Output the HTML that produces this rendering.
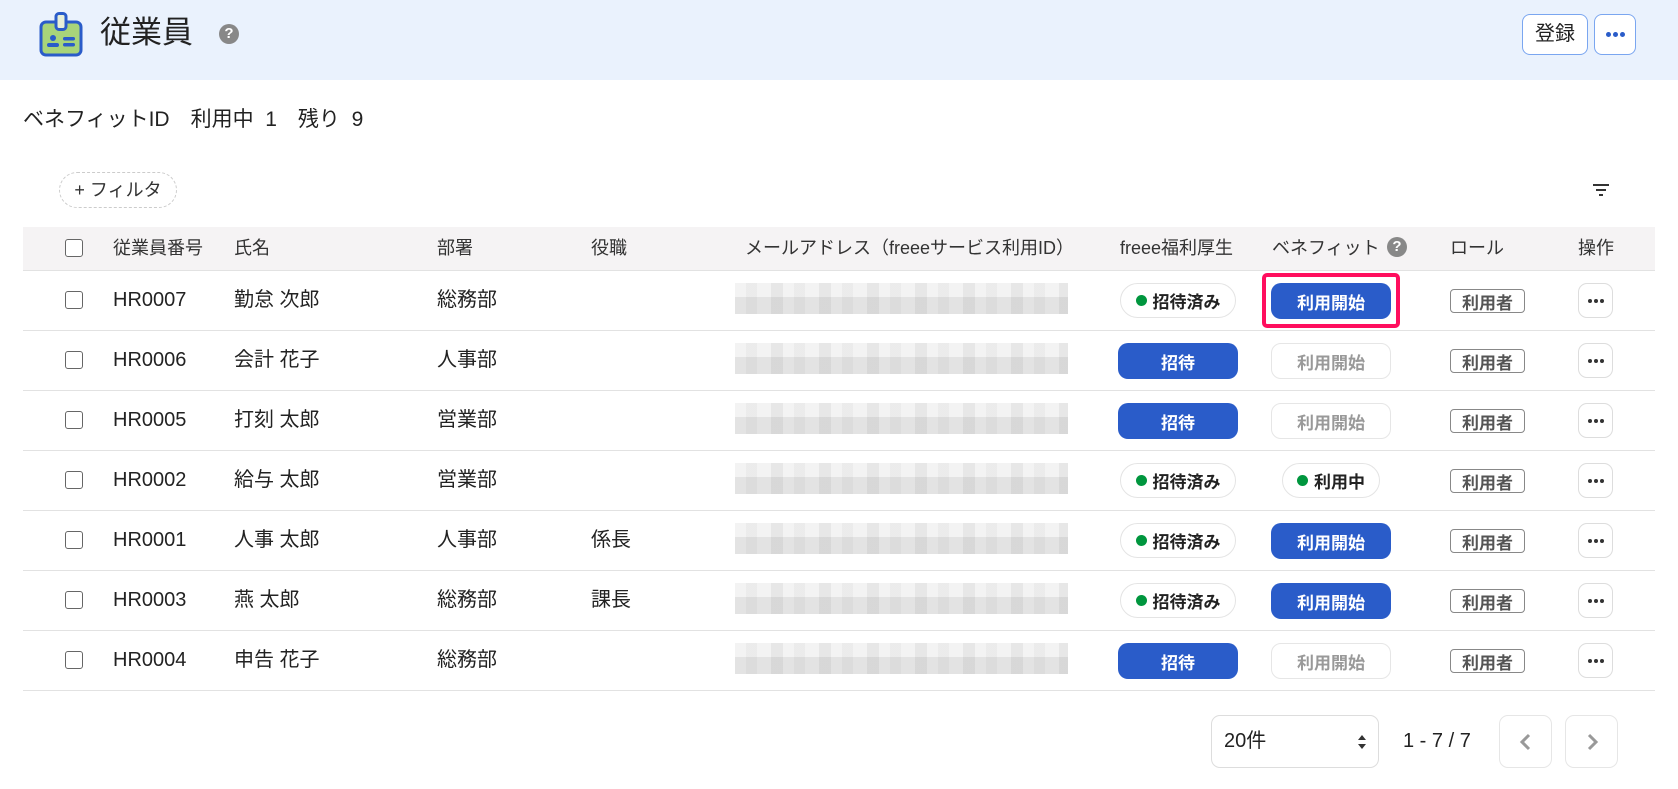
<!DOCTYPE html>
<html><head><meta charset="utf-8"><style>
*{box-sizing:border-box;margin:0;padding:0}
body{width:1678px;height:789px;overflow:hidden;background:#fff;font-family:"Liberation Sans","Noto Sans CJK JP",sans-serif;color:#222;position:relative}
.a{position:absolute}
.hdr{left:0;top:0;width:1678px;height:80px;background:#eaf2fd}
.cb{width:18px;height:18px;border:1.5px solid #666;border-radius:3px;background:#fff}
.th{font-size:18px;color:#333;line-height:20px}
.td{font-size:20px;color:#222;line-height:24px}
.line{left:23px;width:1632px;height:1px;background:#e2e2e2}
.pill{height:35px;border:1px solid #e4e4e4;border-radius:18px;background:#fff;font-size:17px;font-weight:bold;display:flex;align-items:center;justify-content:center;color:#222}
.dot{width:11px;height:11px;border-radius:50%;background:#00963e;margin-right:6px}
.bb{height:36px;border-radius:10px;background:#2a5cc9;color:#fff;font-size:17px;font-weight:bold;display:flex;align-items:center;justify-content:center}
.gb{height:36px;border-radius:10px;background:#fff;border:1px solid #e6e6e6;color:#999;font-size:17px;font-weight:bold;display:flex;align-items:center;justify-content:center}
.tag{width:75px;height:24px;border:1.5px solid #888;border-radius:4px;font-size:17px;font-weight:bold;color:#555;display:flex;align-items:center;justify-content:center}
.mb{width:35px;height:35px;border:1px solid #ddd;border-radius:9px;background:#fff;display:flex;align-items:center;justify-content:center;gap:2px}
.mb i{width:4px;height:4px;border-radius:50%;background:#333;display:block}
.blur{left:735px;width:333px;height:31px;background:
repeating-linear-gradient(90deg,rgba(0,0,0,0) 0 11px,rgba(0,0,0,.03) 11px 22px,rgba(0,0,0,0) 22px 36px,rgba(0,0,0,.05) 36px 48px),
linear-gradient(#f3f3f3 0 14px,#e3e3e3 14px 31px)}
</style></head><body>
<div class="a hdr"></div>
<svg class="a" style="left:38px;top:12px" width="46" height="46" viewBox="0 0 46 46">
<rect x="3" y="10" width="40" height="33" rx="5" fill="#a8d47a" stroke="#2a5cc9" stroke-width="3"/>
<rect x="18" y="1.5" width="10" height="16" rx="3" fill="#e8f0d8" stroke="#2a5cc9" stroke-width="3"/>
<circle cx="15" cy="26" r="3" fill="#2a5cc9"/><rect x="9" y="31" width="12" height="4" rx="2" fill="#2a5cc9"/>
<rect x="25" y="25" width="12" height="3.5" rx="1.7" fill="#2a5cc9"/><rect x="25" y="31" width="12" height="3.5" rx="1.7" fill="#2a5cc9"/>
</svg>
<div class="a" style="left:100px;top:14px;font-size:31px;line-height:38px;color:#222">従業員</div>
<div class="a" style="left:219px;top:24px;width:20px;height:20px;border-radius:50%;background:#888;color:#fff;font-size:15px;font-weight:bold;text-align:center;line-height:20px">?</div>
<div class="a" style="left:1522px;top:14px;width:66px;height:41px;border:1px solid #7aa6f0;border-radius:8px;background:#fff;font-size:20px;text-align:center;line-height:39px">登録</div>
<div class="a" style="left:1594px;top:14px;width:42px;height:41px;border:1px solid #7aa6f0;border-radius:8px;background:#fff;display:flex;align-items:center;justify-content:center;gap:2px"><i style="width:5px;height:5px;border-radius:50%;background:#2a5cc9"></i><i style="width:5px;height:5px;border-radius:50%;background:#2a5cc9"></i><i style="width:5px;height:5px;border-radius:50%;background:#2a5cc9"></i></div>
<div class="a" style="left:23px;top:106px;font-size:21px;line-height:28px;color:#222;white-space:pre">ベネフィットID　利用中  1　残り  9</div>
<div class="a" style="left:59px;top:172px;width:118px;height:36px;border:1px dashed #ccc;border-radius:18px;font-size:18px;line-height:34px;text-align:center;color:#333">+ フィルタ</div>
<svg class="a" style="left:1592px;top:182px" width="18" height="16" viewBox="0 0 18 16"><rect x="1" y="2" width="16" height="2" fill="#333"/><rect x="4" y="7" width="10" height="2" fill="#333"/><rect x="7" y="12" width="4" height="2" fill="#333"/></svg>
<div class="a" style="left:23px;top:227px;width:1632px;height:43px;background:#f5f3f4"></div>
<div class="a cb" style="left:65px;top:239px"></div>
<div class="a th" style="left:113px;top:238px">従業員番号</div>
<div class="a th" style="left:234px;top:238px">氏名</div>
<div class="a th" style="left:437px;top:238px">部署</div>
<div class="a th" style="left:591px;top:238px">役職</div>
<div class="a th" style="left:745px;top:238px">メールアドレス（freeeサービス利用ID）</div>
<div class="a th" style="left:1120px;top:238px">freee福利厚生</div>
<div class="a th" style="left:1272px;top:238px">ベネフィット</div>
<div class="a" style="left:1387px;top:237px;width:20px;height:20px;border-radius:50%;background:#888;color:#fff;font-size:15px;font-weight:bold;text-align:center;line-height:20px">?</div>
<div class="a th" style="left:1450px;top:238px">ロール</div>
<div class="a th" style="left:1578px;top:238px">操作</div>
<div class="a line" style="top:270px"></div>

<div class="a cb" style="left:65px;top:291px"></div><div class="a td" style="left:113px;top:288px">HR0007</div><div class="a td" style="left:234px;top:288px">勤怠 次郎</div><div class="a td" style="left:437px;top:288px">総務部</div>
<div class="a blur" style="top:283px"></div>
<div class="a pill" style="left:1120px;top:283px;width:116px"><span class="dot"></span>招待済み</div>
<div class="a" style="left:1262px;top:273px;width:138px;height:55px;border:4px solid #ff0e5e;border-radius:5px"></div>
<div class="a bb" style="left:1271px;top:283px;width:120px">利用開始</div>
<div class="a tag" style="left:1450px;top:289px">利用者</div><div class="a mb" style="left:1578px;top:283px"><i></i><i></i><i></i></div>
<div class="a line" style="top:330px"></div>

<div class="a cb" style="left:65px;top:351px"></div><div class="a td" style="left:113px;top:348px">HR0006</div><div class="a td" style="left:234px;top:348px">会計 花子</div><div class="a td" style="left:437px;top:348px">人事部</div>
<div class="a blur" style="top:343px"></div>
<div class="a bb" style="left:1118px;top:343px;width:120px">招待</div>
<div class="a gb" style="left:1271px;top:343px;width:120px">利用開始</div>
<div class="a tag" style="left:1450px;top:349px">利用者</div><div class="a mb" style="left:1578px;top:343px"><i></i><i></i><i></i></div>
<div class="a line" style="top:390px"></div>

<div class="a cb" style="left:65px;top:411px"></div><div class="a td" style="left:113px;top:408px">HR0005</div><div class="a td" style="left:234px;top:408px">打刻 太郎</div><div class="a td" style="left:437px;top:408px">営業部</div>
<div class="a blur" style="top:403px"></div>
<div class="a bb" style="left:1118px;top:403px;width:120px">招待</div>
<div class="a gb" style="left:1271px;top:403px;width:120px">利用開始</div>
<div class="a tag" style="left:1450px;top:409px">利用者</div><div class="a mb" style="left:1578px;top:403px"><i></i><i></i><i></i></div>
<div class="a line" style="top:450px"></div>

<div class="a cb" style="left:65px;top:471px"></div><div class="a td" style="left:113px;top:468px">HR0002</div><div class="a td" style="left:234px;top:468px">給与 太郎</div><div class="a td" style="left:437px;top:468px">営業部</div>
<div class="a blur" style="top:463px"></div>
<div class="a pill" style="left:1120px;top:463px;width:116px"><span class="dot"></span>招待済み</div>
<div class="a pill" style="left:1282px;top:463px;width:98px"><span class="dot"></span>利用中</div>
<div class="a tag" style="left:1450px;top:469px">利用者</div><div class="a mb" style="left:1578px;top:463px"><i></i><i></i><i></i></div>
<div class="a line" style="top:510px"></div>

<div class="a cb" style="left:65px;top:531px"></div><div class="a td" style="left:113px;top:528px">HR0001</div><div class="a td" style="left:234px;top:528px">人事 太郎</div><div class="a td" style="left:437px;top:528px">人事部</div><div class="a td" style="left:591px;top:528px">係長</div>
<div class="a blur" style="top:523px"></div>
<div class="a pill" style="left:1120px;top:523px;width:116px"><span class="dot"></span>招待済み</div>
<div class="a bb" style="left:1271px;top:523px;width:120px">利用開始</div>
<div class="a tag" style="left:1450px;top:529px">利用者</div><div class="a mb" style="left:1578px;top:523px"><i></i><i></i><i></i></div>
<div class="a line" style="top:570px"></div>

<div class="a cb" style="left:65px;top:591px"></div><div class="a td" style="left:113px;top:588px">HR0003</div><div class="a td" style="left:234px;top:588px">燕 太郎</div><div class="a td" style="left:437px;top:588px">総務部</div><div class="a td" style="left:591px;top:588px">課長</div>
<div class="a blur" style="top:583px"></div>
<div class="a pill" style="left:1120px;top:583px;width:116px"><span class="dot"></span>招待済み</div>
<div class="a bb" style="left:1271px;top:583px;width:120px">利用開始</div>
<div class="a tag" style="left:1450px;top:589px">利用者</div><div class="a mb" style="left:1578px;top:583px"><i></i><i></i><i></i></div>
<div class="a line" style="top:630px"></div>

<div class="a cb" style="left:65px;top:651px"></div><div class="a td" style="left:113px;top:648px">HR0004</div><div class="a td" style="left:234px;top:648px">申告 花子</div><div class="a td" style="left:437px;top:648px">総務部</div>
<div class="a blur" style="top:643px"></div>
<div class="a bb" style="left:1118px;top:643px;width:120px">招待</div>
<div class="a gb" style="left:1271px;top:643px;width:120px">利用開始</div>
<div class="a tag" style="left:1450px;top:649px">利用者</div><div class="a mb" style="left:1578px;top:643px"><i></i><i></i><i></i></div>
<div class="a line" style="top:690px"></div>

<div class="a" style="left:1211px;top:715px;width:168px;height:53px;border:1px solid #ddd;border-radius:9px;font-size:20px;line-height:51px;padding-left:12px">20件</div>
<svg class="a" style="left:1357px;top:733px" width="10" height="18" viewBox="0 0 10 18"><path d="M1 7 L5 2 L9 7Z M1 11 L5 16 L9 11Z" fill="#333"/></svg>
<div class="a" style="left:1403px;top:728px;font-size:20px;line-height:26px;color:#222">1 - 7 / 7</div>
<div class="a" style="left:1499px;top:715px;width:53px;height:53px;border:1px solid #e6e6e6;border-radius:9px"></div>
<svg class="a" style="left:1516px;top:732px" width="20" height="20" viewBox="0 0 20 20"><path d="M13 3 L6 10 L13 17" fill="none" stroke="#999" stroke-width="3"/></svg>
<div class="a" style="left:1565px;top:715px;width:53px;height:53px;border:1px solid #e6e6e6;border-radius:9px"></div>
<svg class="a" style="left:1582px;top:732px" width="20" height="20" viewBox="0 0 20 20"><path d="M7 3 L14 10 L7 17" fill="none" stroke="#999" stroke-width="3"/></svg>
</body></html>
